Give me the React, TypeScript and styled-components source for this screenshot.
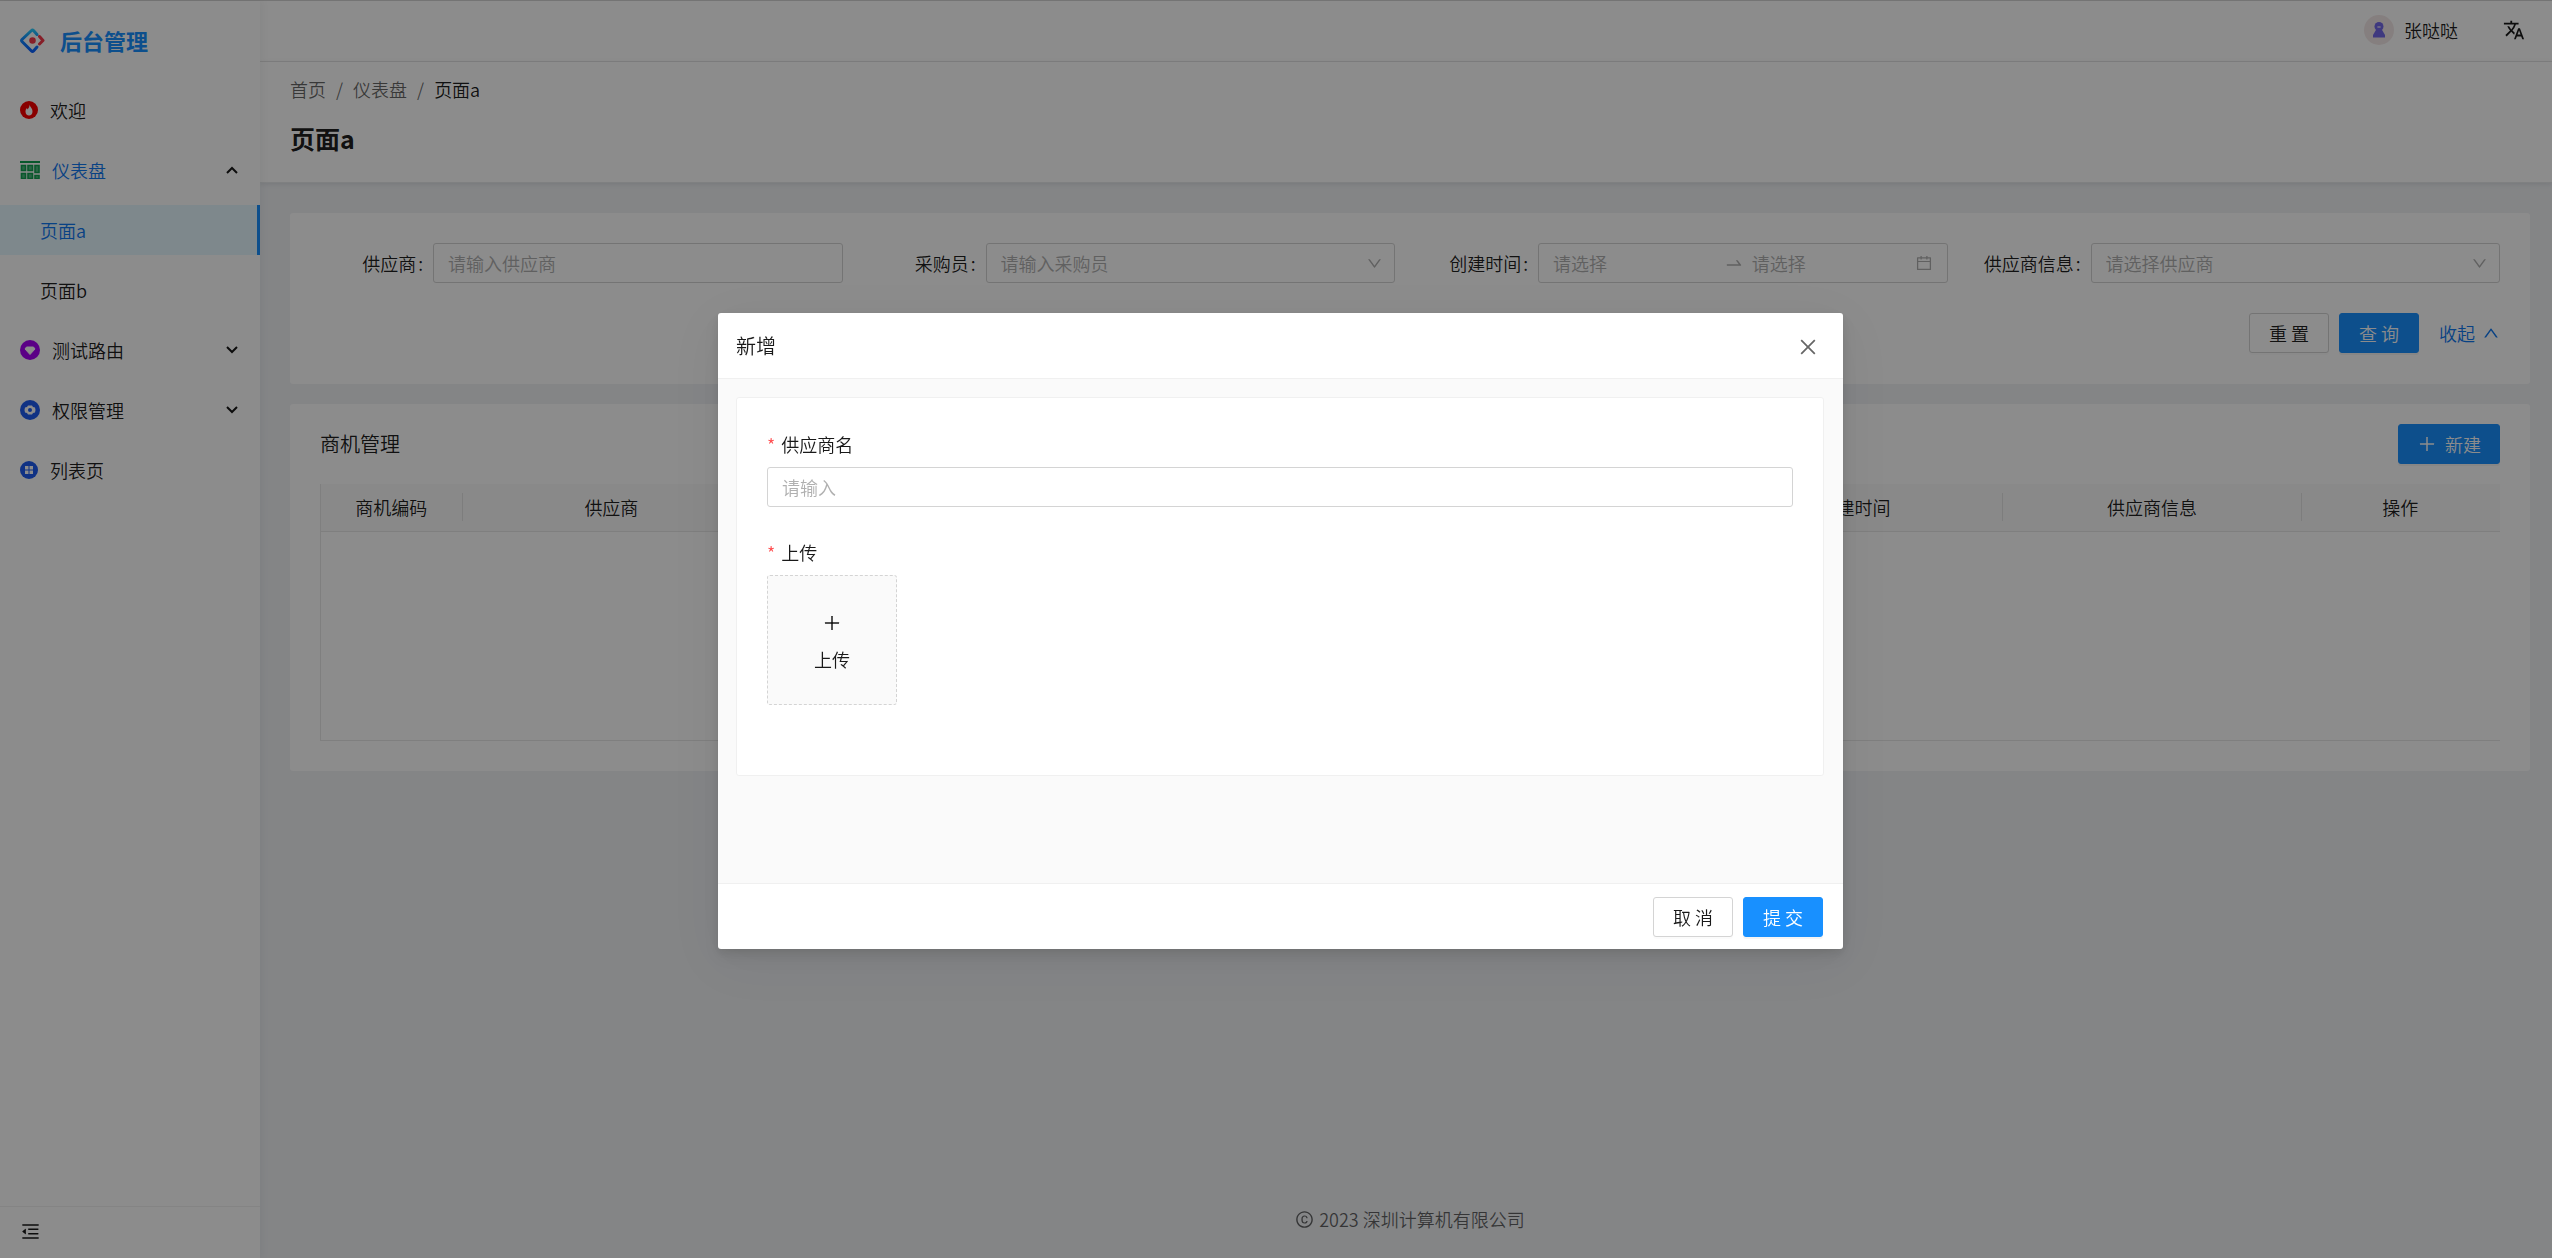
import React from 'react';
import styled, { createGlobalStyle } from 'styled-components';
import {
  AiOutlineCalendar,
  AiOutlineClose,
  AiOutlineCopyright,
  AiOutlineDown,
  AiOutlineMenuFold,
  AiOutlinePlus,
  AiOutlineSwapRight,
  AiOutlineUp,
} from 'react-icons/ai';
import { MdTranslate } from 'react-icons/md';

const color = {
  primary: '#1890ff',
  link: '#1078f0',
  text: 'rgba(0, 0, 0, 0.9)',
  muted: 'rgba(0, 0, 0, 0.6)',
  placeholder: '#b0b0b0',
  border: '#d4d4d4',
  line: '#f0f0f0',
  soft: '#fafafa',
};

const GlobalStyle = createGlobalStyle`
  *, *::before, *::after { box-sizing: border-box; }
  body {
    margin: 0;
    background: #f0f2f5;
    color: ${color.text};
    font-family: "Noto Sans CJK SC", "Open Sans", sans-serif;
    font-size: 18px;
    font-weight: 350;
    line-height: 28px;
  }
  button, input, select { font: inherit; color: inherit; }
  a { color: inherit; text-decoration: none; }
  h1, h2, p, ul, ol { margin: 0; padding: 0; }
  ul, ol { list-style: none; }
  svg { display: block; flex: none; }
`;

const Shell = styled.div`
  display: grid;
  grid-template-columns: 260px minmax(0, 1fr);
  min-height: 100vh;
  border-top: 1px solid ${color.border};
`;

/* Sidebar */

const Sidebar = styled.aside`
  position: relative;
  display: flex;
  flex-direction: column;
  background: #fff;
  box-shadow: 2px 0 8px rgba(29, 35, 41, 0.05);
`;

const Brand = styled.a`
  display: flex;
  align-items: center;
  gap: 15px;
  height: 78px;
  padding-left: 20px;
  color: ${color.primary};
  font-size: 22px;
  font-weight: 700;
`;

const Menu = styled.ul`
  display: grid;
  gap: 10px;
  padding-top: 6px;
`;

const MenuLink = styled.a<{ $nested?: boolean; $selected?: boolean }>`
  display: flex;
  align-items: center;
  gap: 12px;
  height: 50px;
  padding-left: ${(p) => (p.$nested ? 40 : 20)}px;
  color: ${(p) => (p.$selected ? color.link : 'inherit')};
  background: ${(p) => (p.$selected ? '#e6f7ff' : 'transparent')};
  border-right: 3px solid ${(p) => (p.$selected ? color.primary : 'transparent')};
`;

const MenuToggle = styled.button<{ $active?: boolean }>`
  display: flex;
  align-items: center;
  gap: 12px;
  width: 100%;
  height: 50px;
  padding: 0 22px 0 20px;
  border: 0;
  background: none;
  color: ${(p) => (p.$active ? color.link : 'inherit')};
`;

const ToggleArrow = styled.svg`
  margin-left: auto;
  color: ${color.text};
`;

const SidebarFoot = styled.div`
  display: flex;
  align-items: center;
  height: 52px;
  margin-top: auto;
  padding: 0 0 2px 20px;
  border-top: 1px solid ${color.line};
`;

const IconButton = styled.button`
  display: grid;
  place-items: center;
  padding: 0;
  border: 0;
  background: none;
`;

/* Main area */

const Main = styled.div`
  display: flex;
  flex-direction: column;
`;

const TopBar = styled.header`
  display: flex;
  align-items: center;
  justify-content: flex-end;
  gap: 45px;
  height: 61px;
  padding: 0 27px 2px 0;
  background: #fff;
  border-bottom: 1px solid #e8e8e8;
`;

const User = styled.a`
  display: flex;
  align-items: center;
  gap: 10px;
`;

const Avatar = styled.span`
  display: grid;
  place-items: center;
  width: 30px;
  height: 30px;
  border-radius: 50%;
  background: #f3e8e8;
`;

const PageHeader = styled.div`
  display: grid;
  gap: 16px;
  padding: 13px 30px 25px;
  background: #fff;
  border-bottom: 1px solid #e8eaec;
  box-shadow: 0 1px 5px rgba(0, 21, 41, 0.1);
`;

const Crumbs = styled.ol`
  display: flex;
  color: ${color.muted};

  li + li::before {
    content: "/";
    padding: 0 10px;
    color: ${color.muted};
  }

  li:last-child {
    color: ${color.text};
  }
`;

const PageTitle = styled.h1`
  font-size: 25px;
  font-weight: 700;
  line-height: 38px;
`;

const Content = styled.main`
  display: grid;
  gap: 20px;
  padding: 30px 22px 30px 30px;
`;

const Card = styled.section`
  padding: 30px;
  background: #fff;
  border-radius: 3px;
`;

const TableCard = styled(Card)`
  padding-top: 20px;
`;

const QueryForm = styled.form`
  display: grid;
  grid-template-columns: repeat(4, minmax(0, 1fr));
  gap: 30px;
  padding-bottom: 1px;
`;

const Field = styled.div`
  display: grid;
  grid-template-columns: 113px minmax(0, 1fr);
  align-items: center;
`;

const FieldLabel = styled.label`
  padding-right: 10px;
  text-align: right;
  white-space: nowrap;

  &::after {
    content: ":";
    margin-left: 2px;
  }
`;

const TextInput = styled.input`
  width: 100%;
  height: 40px;
  padding: 0 14px;
  border: 1px solid ${color.border};
  border-radius: 3px;
  background: #fff;

  &::placeholder {
    color: ${color.placeholder};
    opacity: 1;
  }
`;

const SelectBox = styled.div`
  display: grid;
  align-items: center;
  color: ${color.placeholder};

  > * {
    grid-area: 1 / 1;
  }

  > svg {
    justify-self: end;
    margin-right: 12px;
    pointer-events: none;
  }
`;

const SelectInput = styled.select`
  appearance: none;
  width: 100%;
  height: 40px;
  padding: 0 14px;
  border: 1px solid ${color.border};
  border-radius: 3px;
  background: #fff;
`;

const RangeBox = styled.div`
  display: flex;
  align-items: center;
  height: 40px;
  padding: 0 14px;
  border: 1px solid ${color.border};
  border-radius: 3px;
  color: ${color.placeholder};
`;

const RangeInput = styled.input`
  flex: 1;
  min-width: 0;
  padding: 0;
  border: 0;
  background: none;

  &::placeholder {
    color: ${color.placeholder};
    opacity: 1;
  }
`;

const RangeArrow = styled.span`
  padding: 0 8px;
`;

const FormActions = styled.div`
  display: flex;
  grid-column: 1 / -1;
  align-items: center;
  justify-content: flex-end;
  gap: 10px;
`;

const Button = styled.button<{ $primary?: boolean }>`
  display: inline-flex;
  align-items: center;
  justify-content: center;
  gap: 8px;
  height: 40px;
  min-width: 80px;
  padding: 0 18px;
  border: 1px solid ${(p) => (p.$primary ? color.primary : color.border)};
  border-radius: 3px;
  background: ${(p) => (p.$primary ? color.primary : '#fff')};
  color: ${(p) => (p.$primary ? '#fff' : 'inherit')};
  box-shadow: 0 2px 0 rgba(0, 0, 0, ${(p) => (p.$primary ? 0.045 : 0.016)});
`;

const CollapseLink = styled.a`
  display: flex;
  align-items: center;
  gap: 7px;
  margin-left: 10px;
  color: ${color.link};
`;

const Toolbar = styled.div`
  display: flex;
  align-items: center;
  justify-content: space-between;
  margin-bottom: 20px;
`;

const ToolbarTitle = styled.h2`
  font-size: 20px;
  font-weight: inherit;
`;

const TableFrame = styled.div`
  min-height: 257px;
  border-left: 1px solid #e8e8e8;
  border-bottom: 1px solid #e8e8e8;
`;

const Table = styled.table`
  width: 100%;
  border-collapse: collapse;
  table-layout: fixed;
`;

const HeadCell = styled.th<{ $share: number }>`
  width: ${(p) => p.$share}%;
  height: 47px;
  padding: 0;
  background: ${color.soft};
  border-bottom: 1px solid #e8e8e8;
  font-weight: inherit;
`;

const HeadText = styled.div<{ $last: boolean }>`
  border-right: 1px solid ${(p) => (p.$last ? 'transparent' : '#e4e4e4')};
`;

const Copyright = styled.footer`
  display: flex;
  align-items: center;
  justify-content: center;
  gap: 5px;
  margin-top: auto;
  padding: 0 0 25px 8px;
  color: ${color.muted};
`;

/* Dialog */

const Mask = styled.div`
  position: fixed;
  inset: 0;
  display: flex;
  align-items: center;
  justify-content: center;
  padding: 4px 0 0 9px;
  background: rgba(0, 0, 0, 0.45);
`;

const Dialog = styled.div`
  width: 1125px;
  max-width: 100%;
  background: #fff;
  border-radius: 3px;
  box-shadow: 0 4px 8px rgba(0, 0, 0, 0.08), 0 8px 20px rgba(0, 0, 0, 0.08),
    0 12px 60px 10px rgba(0, 0, 0, 0.05);
  overflow: hidden;
`;

const DialogHead = styled.div`
  display: flex;
  align-items: center;
  justify-content: space-between;
  height: 66px;
  padding: 0 24px 0 18px;
  border-bottom: 1px solid ${color.line};
`;

const DialogTitle = styled.h2`
  font-size: 20px;
  font-weight: inherit;
`;

const DialogClose = styled(IconButton)`
  padding-top: 3px;
  color: ${color.muted};
`;

const DialogBody = styled.div`
  min-height: 504px;
  padding: 18px 19px 18px 18px;
  background: ${color.soft};
`;

const FormPanel = styled.form`
  display: grid;
  gap: 30px;
  padding: 31px 30px 70px;
  border: 1px solid ${color.line};
  border-radius: 3px;
  background: #fff;
`;

const StackedField = styled.div`
  display: grid;
  gap: 8px;
`;

const RequiredLabel = styled.label`
  line-height: 30px;

  &::before {
    content: "*";
    margin-right: 6px;
    color: #ff4d4f;
  }
`;

const UploadButton = styled.button`
  display: flex;
  flex-direction: column;
  align-items: center;
  justify-content: center;
  gap: 12px;
  width: 130px;
  height: 130px;
  padding-top: 6px;
  border: 1px dashed ${color.border};
  border-radius: 3px;
  background: ${color.soft};
`;

const DialogFoot = styled.div`
  display: flex;
  justify-content: flex-end;
  gap: 10px;
  padding: 13px 20px 12px;
  border-top: 1px solid ${color.line};
`;

/* Drawings */

const Logo = () => (
  <svg width="25" height="25" viewBox="0 0 50 50" fill="none" strokeWidth="6">
    <defs>
      <linearGradient id="logoBlue" x1="0" y1="0" x2="0" y2="1">
        <stop offset="0" stopColor="#29cdff" />
        <stop offset="0.4" stopColor="#148eff" />
        <stop offset="1" stopColor="#0a60ff" />
      </linearGradient>
    </defs>
    <path
      d="M34 13 L27 5 Q25 3 23 5 L4 23 Q2 25 4 27 L23 46 Q25 48 27 46 L34 38"
      stroke="url(#logoBlue)"
      strokeLinecap="round"
    />
    <path d="M39 17 L46 25 L39 32" stroke="#f5384a" strokeLinecap="round" strokeLinejoin="round" />
    <circle cx="25" cy="25" r="6.5" fill="#f5384a" />
  </svg>
);

const FireIcon = () => (
  <svg width="18" height="18" viewBox="0 0 36 36">
    <circle cx="18" cy="18" r="18" fill="#fa0000" />
    <path
      d="M19 7 C20 12 25 14 25 21 C25 26 22 29 18 29 C14 29 11 26 11 21 C11 18 12 16 14 14 L15 17 C18 14 19 11 19 7 Z"
      fill="#fff"
    />
  </svg>
);

const GridIcon = () => (
  <svg width="20" height="18" viewBox="0 0 20 18">
    <path d="M0 0h20v2H0z" fill="#12a150" />
    <path
      d="M1.500 4.500h4v5h-4zM8 4.500h4.500v5H8zM15 4.500h4v7h-4zM1.500 12.500h4v5h-4zM8 12.500h4.500v5H8zM15 14.500h4v3h-4z"
      fill="#4fb880"
      stroke="#12a150"
      strokeWidth="1.6"
    />
  </svg>
);

const DiamondIcon = () => (
  <svg width="20" height="20" viewBox="0 0 20 20">
    <circle cx="10" cy="10" r="10" fill="#a600f5" />
    <path d="M6.500 7h7l1.500 2-5 5.500-5-5.500z" fill="#fff" stroke="#fff" strokeLinejoin="round" />
  </svg>
);

const GearIcon = () => (
  <svg width="20" height="20" viewBox="0 0 20 20">
    <circle cx="10" cy="10" r="10" fill="#1e5bf0" />
    <path
      d="M8 5.500h4l1 1.500 2 .5.500 2.500-.5 2.500-2 .5-1 1.500H8L7 13l-2-.5L4.500 10 5 7.500 7 7z"
      fill="#fff"
    />
    <circle cx="10" cy="10" r="2" fill="#1e5bf0" />
  </svg>
);

const ListIcon = () => (
  <svg width="18" height="18" viewBox="0 0 18 18">
    <circle cx="9" cy="9" r="9" fill="#1e5bf0" />
    <path d="M5 5h3.500v3.500H5zM9.500 5H13v3.500H9.500zM5 9.500h3.500V13H5zM9.500 9.500H13V13H9.500z" fill="#fff" />
  </svg>
);

const AvatarIcon = () => (
  <svg width="12" height="16" viewBox="0 0 12 16" fill="#7468e8">
    <path d="M3.500 7h5L12 13v2.500H0V13z" />
    <circle cx="6" cy="4.500" r="4.500" />
    <ellipse cx="6" cy="5" rx="2" ry="1" fill="#c9bdf0" />
  </svg>
);

const Arrow = ({ up = false }: { up?: boolean }) => (
  <ToggleArrow width="12" height="8" viewBox="0 0 12 8" fill="none" stroke="currentColor" strokeWidth="2">
    <path d={up ? 'M1 7 L6 2 L11 7' : 'M1 1 L6 6 L11 1'} />
  </ToggleArrow>
);

const columns = [
  { title: '商机编码', share: 6.5 },
  { title: '供应商', share: 13.7 },
  { title: '采购员', share: 43.4 },
  { title: '创建时间', share: 13.6 },
  { title: '供应商信息', share: 13.7 },
  { title: '操作', share: 9.1 },
];

const SelectField = ({ id, label, hint }: { id: string; label: string; hint: string }) => (
  <Field>
    <FieldLabel htmlFor={id}>{label}</FieldLabel>
    <SelectBox>
      <SelectInput id={id} defaultValue="">
        <option value="">{hint}</option>
      </SelectInput>
      <AiOutlineDown size={17} />
    </SelectBox>
  </Field>
);

export default function App() {
  return (
    <>
      <GlobalStyle />
      <Shell>
        <Sidebar>
          <Brand href="#home">
            <Logo />
            后台管理
          </Brand>
          <nav>
            <Menu>
              <li>
                <MenuLink href="#welcome">
                  <FireIcon />
                  欢迎
                </MenuLink>
              </li>
              <li>
                <MenuToggle type="button" $active aria-expanded="true">
                  <GridIcon />
                  仪表盘
                  <Arrow up />
                </MenuToggle>
              </li>
              <li>
                <MenuLink href="#a" $nested $selected>
                  页面a
                </MenuLink>
              </li>
              <li>
                <MenuLink href="#b" $nested>
                  页面b
                </MenuLink>
              </li>
              <li>
                <MenuToggle type="button" aria-expanded="false">
                  <DiamondIcon />
                  测试路由
                  <Arrow />
                </MenuToggle>
              </li>
              <li>
                <MenuToggle type="button" aria-expanded="false">
                  <GearIcon />
                  权限管理
                  <Arrow />
                </MenuToggle>
              </li>
              <li>
                <MenuLink href="#list">
                  <ListIcon />
                  列表页
                </MenuLink>
              </li>
            </Menu>
          </nav>
          <SidebarFoot>
            <IconButton type="button" aria-label="收起菜单">
              <AiOutlineMenuFold size={21} />
            </IconButton>
          </SidebarFoot>
        </Sidebar>

        <Main>
          <TopBar>
            <User href="#user">
              <Avatar>
                <AvatarIcon />
              </Avatar>
              张哒哒
            </User>
            <IconButton type="button" aria-label="语言">
              <MdTranslate size={22} />
            </IconButton>
          </TopBar>
          <PageHeader>
            <Crumbs>
              <li>
                <a href="#home">首页</a>
              </li>
              <li>
                <a href="#dashboard">仪表盘</a>
              </li>
              <li>页面a</li>
            </Crumbs>
            <PageTitle>页面a</PageTitle>
          </PageHeader>

          <Content>
            <Card>
              <QueryForm>
                <Field>
                  <FieldLabel htmlFor="supplier">供应商</FieldLabel>
                  <TextInput id="supplier" placeholder="请输入供应商" />
                </Field>
                <SelectField id="buyer" label="采购员" hint="请输入采购员" />
                <Field>
                  <FieldLabel htmlFor="created">创建时间</FieldLabel>
                  <RangeBox>
                    <RangeInput id="created" placeholder="请选择" />
                    <RangeArrow>
                      <AiOutlineSwapRight size={20} />
                    </RangeArrow>
                    <RangeInput aria-label="结束时间" placeholder="请选择" />
                    <AiOutlineCalendar size={18} />
                  </RangeBox>
                </Field>
                <SelectField id="info" label="供应商信息" hint="请选择供应商" />
                <FormActions>
                  <Button type="reset">重 置</Button>
                  <Button type="button" $primary>
                    查 询
                  </Button>
                  <CollapseLink href="#collapse">
                    收起
                    <AiOutlineUp size={18} />
                  </CollapseLink>
                </FormActions>
              </QueryForm>
            </Card>

            <TableCard>
              <Toolbar>
                <ToolbarTitle>商机管理</ToolbarTitle>
                <Button type="button" $primary>
                  <AiOutlinePlus size={20} />
                  新建
                </Button>
              </Toolbar>
              <TableFrame>
                <Table>
                  <thead>
                    <tr>
                      {columns.map((column, index) => (
                        <HeadCell key={column.title} $share={column.share}>
                          <HeadText $last={index === columns.length - 1}>{column.title}</HeadText>
                        </HeadCell>
                      ))}
                    </tr>
                  </thead>
                </Table>
              </TableFrame>
            </TableCard>
          </Content>

          <Copyright>
            <AiOutlineCopyright size={19} />
            2023 深圳计算机有限公司
          </Copyright>
        </Main>
      </Shell>

      <Mask>
        <Dialog role="dialog" aria-modal="true" aria-labelledby="dialog-title">
          <DialogHead>
            <DialogTitle id="dialog-title">新增</DialogTitle>
            <DialogClose type="button" aria-label="关闭">
              <AiOutlineClose size={22} />
            </DialogClose>
          </DialogHead>
          <DialogBody>
            <FormPanel id="create-form">
              <StackedField>
                <RequiredLabel htmlFor="name">供应商名</RequiredLabel>
                <TextInput id="name" placeholder="请输入" />
              </StackedField>
              <StackedField>
                <RequiredLabel htmlFor="upload">上传</RequiredLabel>
                <UploadButton id="upload" type="button">
                  <AiOutlinePlus size={20} />
                  上传
                </UploadButton>
              </StackedField>
            </FormPanel>
          </DialogBody>
          <DialogFoot>
            <Button type="button">取 消</Button>
            <Button type="submit" form="create-form" $primary>
              提 交
            </Button>
          </DialogFoot>
        </Dialog>
      </Mask>
    </>
  );
}
